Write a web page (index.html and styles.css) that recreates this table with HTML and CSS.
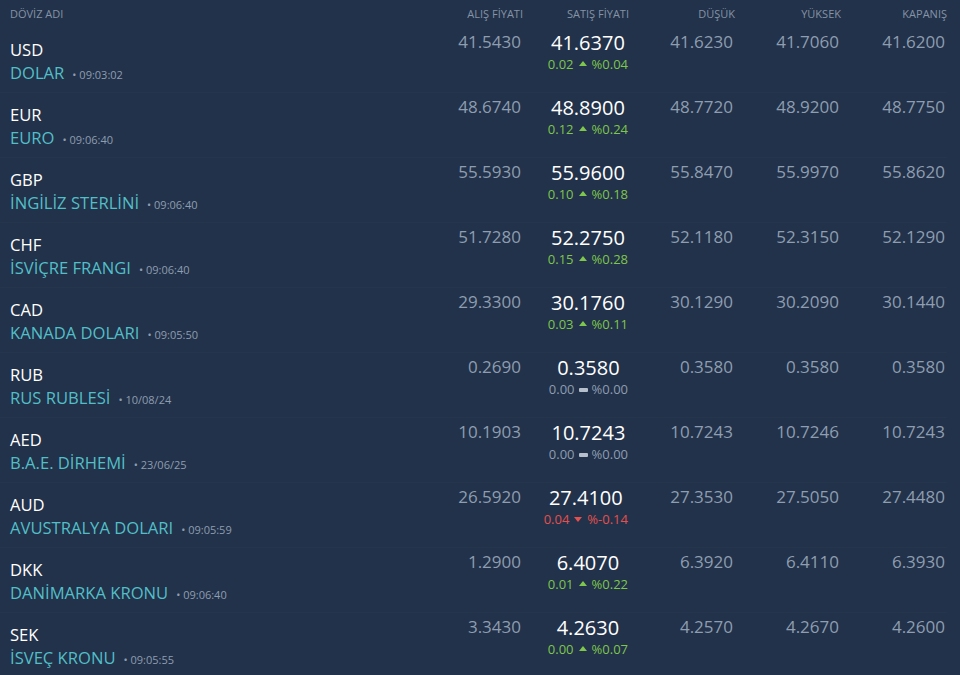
FILE: index.html
```html
<!DOCTYPE html>
<html lang="tr">
<head>
<meta charset="utf-8">
<title>Döviz</title>
<link rel="stylesheet" href="styles.css">
</head>
<body>
<div class="table">
  <div class="row head">
    <div class="c name">DÖVİZ ADI</div>
    <div class="c">ALIŞ FİYATI</div>
    <div class="c">SATIŞ FİYATI</div>
    <div class="c">DÜŞÜK</div>
    <div class="c">YÜKSEK</div>
    <div class="c">KAPANIŞ</div>
  </div>

  <div class="row">
    <div class="c name"><div class="code">USD</div><div class="full"><span class="title">DOLAR</span><span class="time">• 09:03:02</span></div></div>
    <div class="c val">41.5430</div>
    <div class="c sell"><div class="box"><div class="big">41.6370</div><div class="chg up">0.02<i class="tri up"></i>%0.04</div></div></div>
    <div class="c val">41.6230</div>
    <div class="c val">41.7060</div>
    <div class="c val">41.6200</div>
  </div>

  <div class="row">
    <div class="c name"><div class="code">EUR</div><div class="full"><span class="title">EURO</span><span class="time">• 09:06:40</span></div></div>
    <div class="c val">48.6740</div>
    <div class="c sell"><div class="box"><div class="big">48.8900</div><div class="chg up">0.12<i class="tri up"></i>%0.24</div></div></div>
    <div class="c val">48.7720</div>
    <div class="c val">48.9200</div>
    <div class="c val">48.7750</div>
  </div>

  <div class="row">
    <div class="c name"><div class="code">GBP</div><div class="full"><span class="title">İNGİLİZ STERLİNİ</span><span class="time">• 09:06:40</span></div></div>
    <div class="c val">55.5930</div>
    <div class="c sell"><div class="box"><div class="big">55.9600</div><div class="chg up">0.10<i class="tri up"></i>%0.18</div></div></div>
    <div class="c val">55.8470</div>
    <div class="c val">55.9970</div>
    <div class="c val">55.8620</div>
  </div>

  <div class="row">
    <div class="c name"><div class="code">CHF</div><div class="full"><span class="title">İSVİÇRE FRANGI</span><span class="time">• 09:06:40</span></div></div>
    <div class="c val">51.7280</div>
    <div class="c sell"><div class="box"><div class="big">52.2750</div><div class="chg up">0.15<i class="tri up"></i>%0.28</div></div></div>
    <div class="c val">52.1180</div>
    <div class="c val">52.3150</div>
    <div class="c val">52.1290</div>
  </div>

  <div class="row">
    <div class="c name"><div class="code">CAD</div><div class="full"><span class="title">KANADA DOLARI</span><span class="time">• 09:05:50</span></div></div>
    <div class="c val">29.3300</div>
    <div class="c sell"><div class="box"><div class="big">30.1760</div><div class="chg up">0.03<i class="tri up"></i>%0.11</div></div></div>
    <div class="c val">30.1290</div>
    <div class="c val">30.2090</div>
    <div class="c val">30.1440</div>
  </div>

  <div class="row">
    <div class="c name"><div class="code">RUB</div><div class="full"><span class="title">RUS RUBLESİ</span><span class="time">• 10/08/24</span></div></div>
    <div class="c val">0.2690</div>
    <div class="c sell"><div class="box"><div class="big">0.3580</div><div class="chg flat">0.00<i class="bar"></i>%0.00</div></div></div>
    <div class="c val">0.3580</div>
    <div class="c val">0.3580</div>
    <div class="c val">0.3580</div>
  </div>

  <div class="row">
    <div class="c name"><div class="code">AED</div><div class="full"><span class="title">B.A.E. DİRHEMİ</span><span class="time">• 23/06/25</span></div></div>
    <div class="c val">10.1903</div>
    <div class="c sell"><div class="box"><div class="big">10.7243</div><div class="chg flat">0.00<i class="bar"></i>%0.00</div></div></div>
    <div class="c val">10.7243</div>
    <div class="c val">10.7246</div>
    <div class="c val">10.7243</div>
  </div>

  <div class="row">
    <div class="c name"><div class="code">AUD</div><div class="full"><span class="title">AVUSTRALYA DOLARI</span><span class="time">• 09:05:59</span></div></div>
    <div class="c val">26.5920</div>
    <div class="c sell"><div class="box"><div class="big">27.4100</div><div class="chg down">0.04<i class="tri down"></i>%-0.14</div></div></div>
    <div class="c val">27.3530</div>
    <div class="c val">27.5050</div>
    <div class="c val">27.4480</div>
  </div>

  <div class="row">
    <div class="c name"><div class="code">DKK</div><div class="full"><span class="title">DANİMARKA KRONU</span><span class="time">• 09:06:40</span></div></div>
    <div class="c val">1.2900</div>
    <div class="c sell"><div class="box"><div class="big">6.4070</div><div class="chg up">0.01<i class="tri up"></i>%0.22</div></div></div>
    <div class="c val">6.3920</div>
    <div class="c val">6.4110</div>
    <div class="c val">6.3930</div>
  </div>

  <div class="row">
    <div class="c name"><div class="code">SEK</div><div class="full"><span class="title">İSVEÇ KRONU</span><span class="time">• 09:05:55</span></div></div>
    <div class="c val">3.3430</div>
    <div class="c sell"><div class="box"><div class="big">4.2630</div><div class="chg up">0.00<i class="tri up"></i>%0.07</div></div></div>
    <div class="c val">4.2570</div>
    <div class="c val">4.2670</div>
    <div class="c val">4.2600</div>
  </div>
</div>
</body>
</html>
```
FILE: styles.css
```css
html, body {
  margin: 0;
  padding: 0;
  background: #22324a;
}
body {
  font-family: "Open Sans", "Noto Sans", sans-serif;
  color: #8e9db0;
  overflow: hidden;
  height: 675px;
}
.table {
  padding-right: 13px;
}
.row {
  display: grid;
  grid-template-columns: 1fr repeat(5, 106px);
  height: 65px;
  box-sizing: border-box;
  border-bottom: 1px solid #24354c;
}
.row.head {
  height: 28px;
  border-bottom: none;
  align-items: center;
  font-size: 11px;
  color: #8593a6;
  line-height: 28px;
}
.c {
  text-align: right;
}
.c.name {
  text-align: left;
  padding-left: 10px;
}
.row:not(.head) .name {
  padding-top: 10px;
  line-height: 23px;
}
.code {
  font-size: 16.6px;
  color: #ffffff;
}
.full {
  font-size: 16.6px;
}
.title {
  color: #52bfc8;
}
.time {
  font-size: 11px;
  color: #8e9db0;
  margin-left: 8px;
}
.val {
  padding-top: 2px;
  padding-right: 2px;
  font-size: 17px;
  line-height: 24px;
  color: #8e9db0;
}
.sell {
  padding-top: 3px;
  padding-right: 1px;
}
.box {
  display: inline-block;
  text-align: center;
}
.big {
  font-size: 20px;
  line-height: 24px;
  color: #ffffff;
}
.chg {
  font-size: 13px;
  line-height: 19px;
  display: flex;
  align-items: center;
  justify-content: center;
}
.chg.up { color: #7fc64c; }
.chg.down { color: #e4504d; }
.chg.flat { color: #8e9db0; }
.tri {
  display: inline-block;
  width: 0;
  height: 0;
  margin: 0 5px;
  border-left: 4px solid transparent;
  border-right: 4px solid transparent;
}
.tri.up {
  border-bottom: 5px solid #7fc64c;
  margin-top: -2px;
}
.tri.down {
  border-top: 5px solid #e4504d;
}
.bar {
  display: inline-block;
  width: 9px;
  height: 4px;
  border-radius: 1px;
  background: #b5c0cc;
  margin: 0 4px;
}
```
